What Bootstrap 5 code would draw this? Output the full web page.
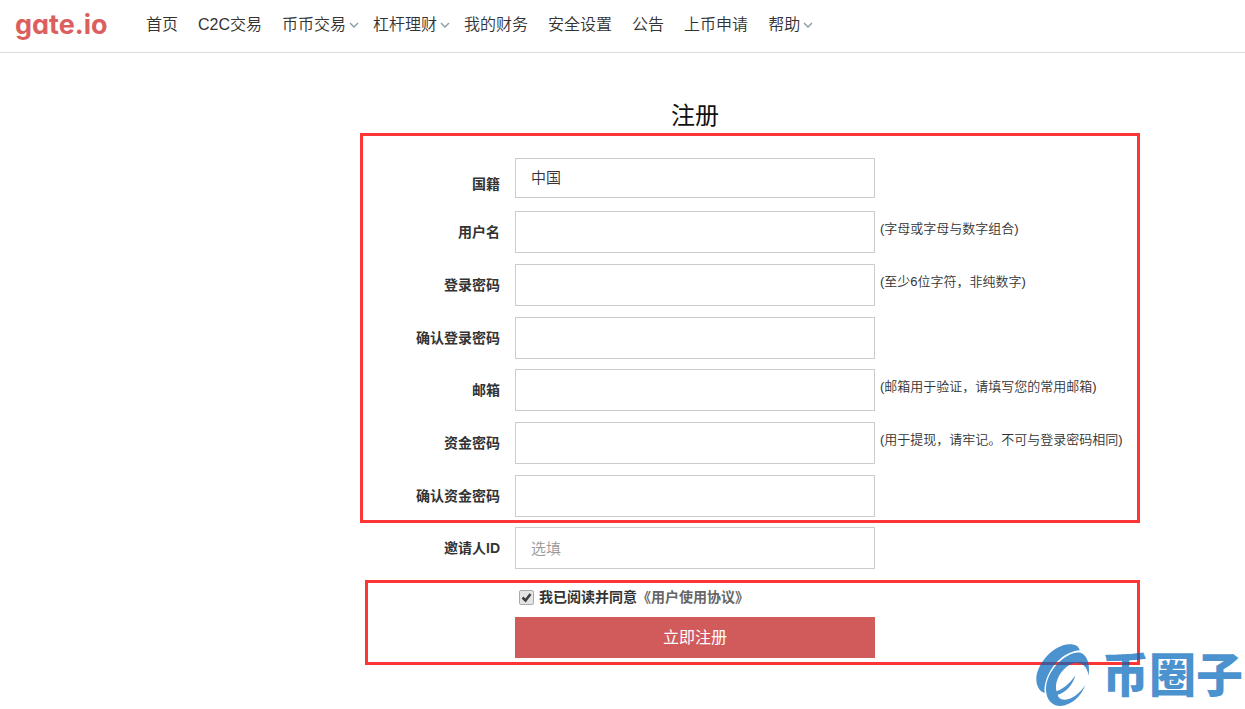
<!DOCTYPE html>
<html lang="zh-CN">
<head>
<meta charset="utf-8">
<meta name="viewport" content="width=device-width, initial-scale=1">
<title>注册 - gate.io</title>
<link href="https://cdn.jsdelivr.net/npm/bootstrap@5.3.0/dist/css/bootstrap.min.css" rel="stylesheet">
<style>
body{font-family:"Liberation Sans","Noto Sans CJK SC",sans-serif;font-size:14px;line-height:20px;color:#333;background:#fff}
.site-bar{height:53px;border-bottom:1px solid #dcdcdc;padding:0 15px 3px}
.brand-name{font-family:Inter,sans-serif;font-feature-settings:"cv11";font-weight:700;font-size:27px;line-height:40px;color:#dc5f5f;width:131px}
.brand-name:hover{color:#dc5f5f}
.menu-bar{font-size:16px;line-height:24px;font-weight:350;column-gap:20px}
.menu-bar a{color:#333;text-decoration:none;white-space:nowrap}
.has-sub{margin-right:-6px}
.has-sub svg{width:10px;height:6px;margin-left:3px}
.signup-area{padding:47px 105px 40px 0}
.signup{width:780px}
.form-line{display:grid;grid-template-columns:137px 360px 1fr;column-gap:15px;align-items:center}
.title-line{padding:0 3px 1px}
.signup h1{font-size:24px;line-height:32px;font-weight:400;color:#111;margin:0}
.form-line>label{text-align:right;font-weight:700}
.outlined{border:3px solid #fc3636}
.fields{padding:22px 0 3px}
.line-group{display:grid;row-gap:11px}
.line-group+.line-group{margin-top:10px}
.box-input{height:42px;border:1px solid #ccc;border-radius:0;padding:0 15px;font-size:15px;font-weight:350;color:#333}
.box-input::placeholder{color:#999}
.country{height:40px;background-image:none}
.country-line{margin-bottom:13px}
.country-line>label{padding-top:11px}
.hint{font-size:13px;font-weight:350;color:#333;margin:0 0 6px -10px;white-space:nowrap}
.invite{padding:4px 3px 11px}
.confirm{margin-left:5px;padding:0 0 4px}
.confirm .form-line{grid-template-columns:132px 360px 1fr}
.confirm .form-line>*{grid-column:2}
.agree{height:34px;padding:0 0 6px 4px;font-weight:700}
.agree input{appearance:none;width:15px;height:15px;border:1px solid #aaa;border-radius:2px;margin:0 5px 0 0;background:#e4e4e4 url("data:image/svg+xml,%3Csvg xmlns='http://www.w3.org/2000/svg' viewBox='0 0 13 13'%3E%3Cpath d='M2.5 6.5l3 3L10.5 3' fill='none' stroke='%23404040' stroke-width='2.6'/%3E%3C/svg%3E") center/13px no-repeat}
.agree a{color:#666;text-decoration:none}
.submit{height:41px;border:0;border-radius:0;background:#d15b5b;color:#fff;font-size:16px;padding:1px 0 0}
.submit:hover{background:#c44f4f;color:#fff}
.stamp{position:absolute;right:2px;bottom:0;opacity:.7;color:#0066ba;pointer-events:none}
.stamp svg{width:54px;height:66px}
.stamp span{font-size:47px;line-height:66px;font-weight:900;margin-left:12px}
</style>
</head>
<body class="position-relative min-vh-100">
<header class="site-bar d-flex align-items-center">
  <a class="brand-name text-decoration-none flex-shrink-0" href="#">gate.io</a>
  <nav class="menu-bar d-flex">
    <a href="#">首页</a>
    <a href="#">C2C交易</a>
    <a class="has-sub d-flex align-items-center" href="#">币币交易<svg viewBox="0 0 10 6"><path d="M1 1l4 4 4-4" fill="none" stroke="#8c9ba3" stroke-width="1.4"/></svg></a>
    <a class="has-sub d-flex align-items-center" href="#">杠杆理财<svg viewBox="0 0 10 6"><path d="M1 1l4 4 4-4" fill="none" stroke="#8c9ba3" stroke-width="1.4"/></svg></a>
    <a href="#">我的财务</a>
    <a href="#">安全设置</a>
    <a href="#">公告</a>
    <a href="#">上币申请</a>
    <a class="has-sub d-flex align-items-center" href="#">帮助<svg viewBox="0 0 10 6"><path d="M1 1l4 4 4-4" fill="none" stroke="#8c9ba3" stroke-width="1.4"/></svg></a>
  </nav>
</header>
<main class="signup-area d-flex justify-content-end">
  <form class="signup">
    <div class="form-line title-line"><span></span><h1 class="text-center">注册</h1></div>
    <div class="outlined fields mt-0">
      <div class="form-line country-line"><label for="country">国籍</label><select class="form-select box-input country" id="country"><option>中国</option></select></div>
      <div class="line-group">
        <div class="form-line"><label for="user">用户名</label><input class="form-control box-input" id="user" type="text"><p class="hint">(字母或字母与数字组合)</p></div>
        <div class="form-line"><label for="pw">登录密码</label><input class="form-control box-input" id="pw" type="password"><p class="hint">(至少6位字符，非纯数字)</p></div>
        <div class="form-line"><label for="pw2">确认登录密码</label><input class="form-control box-input" id="pw2" type="password"></div>
      </div>
      <div class="line-group">
        <div class="form-line"><label for="mail">邮箱</label><input class="form-control box-input" id="mail" type="email"><p class="hint">(邮箱用于验证，请填写您的常用邮箱)</p></div>
        <div class="form-line"><label for="fund">资金密码</label><input class="form-control box-input" id="fund" type="password"><p class="hint">(用于提现，请牢记。不可与登录密码相同)</p></div>
        <div class="form-line"><label for="fund2">确认资金密码</label><input class="form-control box-input" id="fund2" type="password"></div>
      </div>
    </div>
    <div class="invite"><div class="form-line"><label for="ref">邀请人ID</label><input class="form-control box-input" id="ref" type="text" placeholder="选填"></div></div>
    <div class="outlined confirm">
      <div class="form-line">
        <div class="agree d-flex align-items-center"><input type="checkbox" id="agree" checked><label for="agree">我已阅读并同意</label><a href="#">《用户使用协议》</a></div>
        <button class="btn submit" type="submit">立即注册</button>
      </div>
    </div>
  </form>
</main>
<div class="stamp d-flex align-items-center">
  <svg viewBox="45 39 162 198" fill="currentColor"><path d="M176 61C174 48 160 42 144 43C98 45 45 102 46 150C47 170 56 184 71 189C66 140 112 66 176 61Z"/><path d="M203 137C206 110 204 82 181 69C145 58 74 118 75 180C76 210 94 228 118 228C150 226 180 201 193 165C178 189 152 210 130 209C118 208 111 203 110 194C135 190 158 160 163 136C150 157 130 175 107 184C98 157 122 110 158 100C182 95 198 108 203 137Z"/></svg>
  <span>币圈子</span>
</div>
<script src="https://cdn.jsdelivr.net/npm/bootstrap@5.3.0/dist/js/bootstrap.bundle.min.js"></script>
</body>
</html>
